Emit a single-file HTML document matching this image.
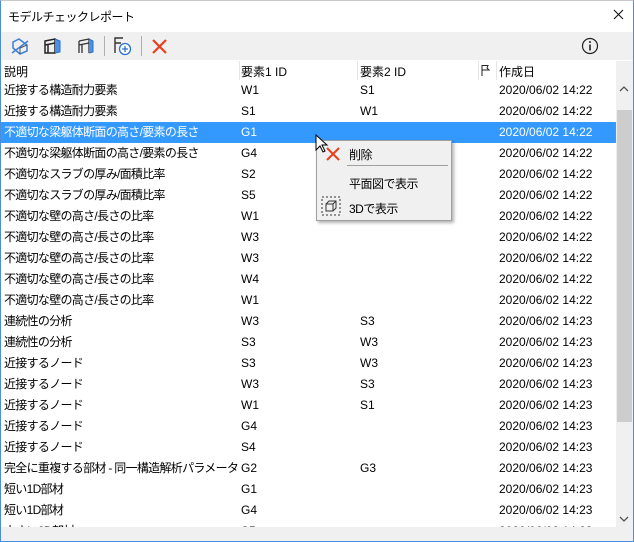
<!DOCTYPE html>
<html><head><meta charset="utf-8"><style>
*{box-sizing:border-box;margin:0;padding:0}
body{width:634px;height:542px;overflow:hidden;background:#fff;font-family:"Liberation Sans","Noto Sans CJK JP",sans-serif;font-size:12px;color:#000;position:relative}
.win{position:absolute;left:0;top:0;width:634px;height:542px;border:1px solid #4a8fd8;border-top:1px solid #c8c8c8}
.title{position:absolute;left:8px;top:8px;font-size:12px;letter-spacing:-0.5px}
.tb{position:absolute;left:1px;top:32px;width:632px;height:28px;background:#f0f0f0}
.sep{position:absolute;top:4px;width:1px;height:20px;background:#b0b0b0}
.hdr{position:absolute;left:1px;top:61px;width:615px;height:19px;background:#fff}
.hdr span,.row span{position:absolute;white-space:nowrap}
.row span:first-child{letter-spacing:-0.7px}
.hl{position:absolute;top:0;width:1px;height:19px;background:#e5e5e5}
.row{position:absolute;left:1px;width:615px;height:21px;line-height:21px}
.row.sel{background:#3399ff;color:#fff;outline:1px dotted #c08040;outline-offset:-1px}
.sb{position:absolute;left:616px;top:61px;width:17px;height:466px;background:#f0f0f0}
.thumb{position:absolute;left:617px;top:110px;width:15px;height:312px;background:#cdcdcd}
.bot{position:absolute;left:1px;top:527px;width:632px;height:14px;background:#f0f0f0}
.menu{position:absolute;left:316px;top:140px;width:136px;height:81px;background:#f0f0f0;border:1px solid #a0a0a0;box-shadow:2px 2px 3px rgba(0,0,0,.3)}
.menu span{position:absolute;left:32px;white-space:nowrap;letter-spacing:-0.5px}
</style></head><body>
<div class="win"></div>
<div class="title">モデルチェックレポート</div>
<svg style="position:absolute;left:613px;top:9px" width="11" height="11" viewBox="0 0 11 11"><path d="M1 1 L10 10 M10 1 L1 10" stroke="#111" stroke-width="1.1"/></svg>
<div class="tb">
<svg style="position:absolute;left:9px;top:5px" width="20" height="18" viewBox="0 0 20 18"><path d="M3 5 L9 2 L17 8 L17 14 L10 17 L3 11 Z" fill="none" stroke="#3a7fd8" stroke-width="1.5"/><path d="M2 16 L18 4" stroke="#3a7fd8" stroke-width="1.5"/><path d="M10 11 L17 8 M10 11 L10 17" stroke="#555" stroke-width="1"/></svg>
<svg style="position:absolute;left:42px;top:5px" width="20" height="18" viewBox="0 0 20 18"><path d="M2 4 L12 2 L12 16 L2 16 Z M2 8 L12 6 M5 8 L5 16" fill="none" stroke="#222" stroke-width="1.5"/><path d="M12 2 L17 4 L17 15 L12 16" fill="#4a90e8" stroke="#2a70c8"/></svg>
<svg style="position:absolute;left:76px;top:5px" width="20" height="18" viewBox="0 0 20 18"><path d="M2 4 L12 2 L12 16 M2 4 L2 16 M2 8 L12 6 M5 8 L5 16" fill="none" stroke="#333" stroke-width="1.3"/><path d="M12 2 L16 4 L16 15 L12 16" fill="#4a90e8" stroke="#2a70c8"/></svg>
<div class="sep" style="left:103px"></div>
<svg style="position:absolute;left:111px;top:4px" width="22" height="20" viewBox="0 0 22 20"><path d="M3 17 L3 2 L11 2 M3 7 L9 7" fill="none" stroke="#333" stroke-width="1.4"/><circle cx="13" cy="13" r="5.5" fill="#fff" stroke="#2a70c8" stroke-width="1.3"/><path d="M13 10 V16 M10 13 H16" stroke="#2a70c8" stroke-width="1.3"/></svg>
<div class="sep" style="left:140px"></div>
<svg style="position:absolute;left:151px;top:7px" width="15" height="15" viewBox="0 0 15 15"><path d="M1 1 L14 14 M14 1 L1 14" stroke="#e8401c" stroke-width="2.2"/></svg>
<svg style="position:absolute;left:580px;top:5px" width="18" height="18" viewBox="0 0 18 18"><circle cx="9" cy="9" r="7.5" fill="none" stroke="#222" stroke-width="1.2"/><path d="M9 7.5 V13.5" stroke="#222" stroke-width="1.6"/><circle cx="9" cy="5" r="1" fill="#222"/></svg>
</div>
<div class="hdr">
<span style="left:3px;top:2px">説明</span>
<div class="hl" style="left:238px"></div>
<span style="left:240px;top:2px">要素1 ID</span>
<div class="hl" style="left:356px"></div>
<span style="left:359px;top:2px">要素2 ID</span>
<div class="hl" style="left:477px"></div>
<svg style="position:absolute;left:480px;top:3px" width="10" height="13" viewBox="0 0 10 13"><path d="M1 1 V12 M1 1.5 H7 L6 4 L8 6 H1" fill="none" stroke="#222" stroke-width="1"/></svg>
<div class="hl" style="left:495px"></div>
<span style="left:498px;top:2px">作成日</span>
<svg style="position:absolute;left:619px;top:5px" width="8" height="9" viewBox="0 0 8 9"><path d="M2 0 L7 4.5 L2 9 Z" fill="#222"/></svg>
</div>
<div class="row" style="top:80px"><span style="left:3px">近接する構造耐力要素</span><span style="left:240px">W1</span><span style="left:359px">S1</span><span style="left:498px">2020/06/02 14:22</span></div>
<div class="row" style="top:101px"><span style="left:3px">近接する構造耐力要素</span><span style="left:240px">S1</span><span style="left:359px">W1</span><span style="left:498px">2020/06/02 14:22</span></div>
<div class="row sel" style="top:122px"><span style="left:3px">不適切な梁躯体断面の高さ/要素の長さ</span><span style="left:240px">G1</span><span style="left:498px">2020/06/02 14:22</span></div>
<div class="row" style="top:143px"><span style="left:3px">不適切な梁躯体断面の高さ/要素の長さ</span><span style="left:240px">G4</span><span style="left:498px">2020/06/02 14:22</span></div>
<div class="row" style="top:164px"><span style="left:3px">不適切なスラブの厚み/面積比率</span><span style="left:240px">S2</span><span style="left:498px">2020/06/02 14:22</span></div>
<div class="row" style="top:185px"><span style="left:3px">不適切なスラブの厚み/面積比率</span><span style="left:240px">S5</span><span style="left:498px">2020/06/02 14:22</span></div>
<div class="row" style="top:206px"><span style="left:3px">不適切な壁の高さ/長さの比率</span><span style="left:240px">W1</span><span style="left:498px">2020/06/02 14:22</span></div>
<div class="row" style="top:227px"><span style="left:3px">不適切な壁の高さ/長さの比率</span><span style="left:240px">W3</span><span style="left:498px">2020/06/02 14:22</span></div>
<div class="row" style="top:248px"><span style="left:3px">不適切な壁の高さ/長さの比率</span><span style="left:240px">W3</span><span style="left:498px">2020/06/02 14:22</span></div>
<div class="row" style="top:269px"><span style="left:3px">不適切な壁の高さ/長さの比率</span><span style="left:240px">W4</span><span style="left:498px">2020/06/02 14:22</span></div>
<div class="row" style="top:290px"><span style="left:3px">不適切な壁の高さ/長さの比率</span><span style="left:240px">W1</span><span style="left:498px">2020/06/02 14:22</span></div>
<div class="row" style="top:311px"><span style="left:3px">連続性の分析</span><span style="left:240px">W3</span><span style="left:359px">S3</span><span style="left:498px">2020/06/02 14:23</span></div>
<div class="row" style="top:332px"><span style="left:3px">連続性の分析</span><span style="left:240px">S3</span><span style="left:359px">W3</span><span style="left:498px">2020/06/02 14:23</span></div>
<div class="row" style="top:353px"><span style="left:3px">近接するノード</span><span style="left:240px">S3</span><span style="left:359px">W3</span><span style="left:498px">2020/06/02 14:23</span></div>
<div class="row" style="top:374px"><span style="left:3px">近接するノード</span><span style="left:240px">W3</span><span style="left:359px">S3</span><span style="left:498px">2020/06/02 14:23</span></div>
<div class="row" style="top:395px"><span style="left:3px">近接するノード</span><span style="left:240px">W1</span><span style="left:359px">S1</span><span style="left:498px">2020/06/02 14:23</span></div>
<div class="row" style="top:416px"><span style="left:3px">近接するノード</span><span style="left:240px">G4</span><span style="left:498px">2020/06/02 14:23</span></div>
<div class="row" style="top:437px"><span style="left:3px">近接するノード</span><span style="left:240px">S4</span><span style="left:498px">2020/06/02 14:23</span></div>
<div class="row" style="top:458px"><span style="left:3px">完全に重複する部材 - 同一構造解析パラメータ</span><span style="left:240px">G2</span><span style="left:359px">G3</span><span style="left:498px">2020/06/02 14:23</span></div>
<div class="row" style="top:479px"><span style="left:3px">短い1D部材</span><span style="left:240px">G1</span><span style="left:498px">2020/06/02 14:23</span></div>
<div class="row" style="top:500px"><span style="left:3px">短い1D部材</span><span style="left:240px">G4</span><span style="left:498px">2020/06/02 14:23</span></div>
<div class="row" style="top:521px"><span style="left:3px">小さい2D部材</span><span style="left:240px">S5</span><span style="left:498px">2020/06/02 14:23</span></div>
<div class="sb"></div>
<div class="thumb"></div>
<svg style="position:absolute;left:619px;top:86px" width="10" height="6" viewBox="0 0 10 6"><path d="M1 5 L5 1 L9 5" fill="none" stroke="#555" stroke-width="1.3"/></svg>
<svg style="position:absolute;left:619px;top:516px" width="10" height="6" viewBox="0 0 10 6"><path d="M1 1 L5 5 L9 1" fill="none" stroke="#555" stroke-width="1.3"/></svg>
<div class="bot"></div>
<div class="menu">
<svg style="position:absolute;left:9px;top:6px" width="14" height="14" viewBox="0 0 14 14"><path d="M1 1 L13 13 M13 1 L1 13" stroke="#e8401c" stroke-width="2"/></svg>
<span style="top:5px">削除</span>
<div style="position:absolute;left:30px;top:24px;width:101px;height:1px;background:#a0a0a0"></div>
<span style="top:34px">平面図で表示</span>
<svg style="position:absolute;left:4px;top:55px" width="20" height="20" viewBox="0 0 20 20"><rect x="1" y="1" width="18" height="18" fill="none" stroke="#333" stroke-dasharray="2 2"/><path d="M5 8 L8 5 L15 5 L15 12 L12 15 L5 15 Z M5 8 L12 8 L12 15 M12 8 L15 5" fill="none" stroke="#333" stroke-width="1"/></svg>
<span style="top:59px">3Dで表示</span>
</div>
<svg style="position:absolute;left:315px;top:134px" width="14" height="20" viewBox="0 0 14 20"><path d="M1 1 L1 16 L5 12 L8 18 L10 17 L7 11 L12 11 Z" fill="#fff" stroke="#000" stroke-width="1"/></svg>
</body></html>
